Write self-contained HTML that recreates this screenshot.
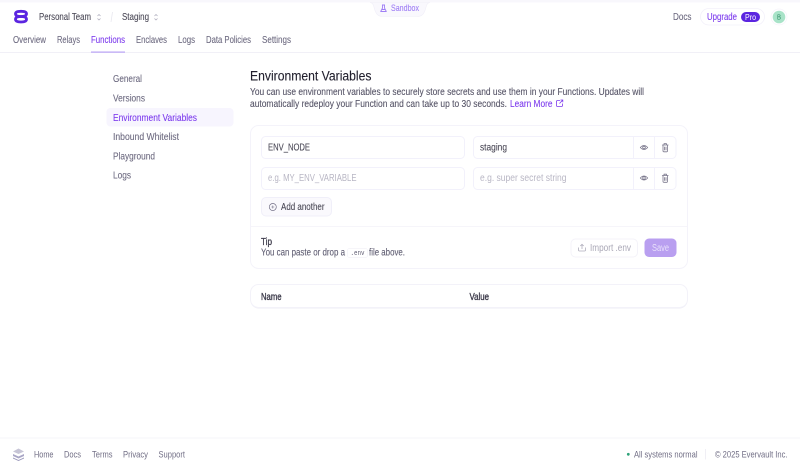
<!DOCTYPE html>
<html>
<head>
<meta charset="utf-8">
<style>
html,body{margin:0;padding:0;background:#fff;width:800px;height:470px;overflow:hidden}
svg{display:block;filter:blur(.35px)}
text{font-family:"Liberation Sans",sans-serif;font-size:9.800px;fill:#6d6a80;stroke-width:.1;paint-order:stroke}
.d{fill:#4a4856;stroke:#4a4856}
.p{fill:#7c3aed;stroke:#7c3aed}
.ph{fill:#b8b6c4}
.g{fill:#716e85;font-size:9.500px}
.t{stroke:#6d6a80}
.ic{fill:none;stroke:#7a778c;stroke-width:.8;stroke-linecap:round;stroke-linejoin:round}
</style>
</head>
<body>
<svg width="800" height="470" viewBox="0 0 800 470" xmlns="http://www.w3.org/2000/svg">
<rect width="800" height="470" fill="#fff"/>
<!-- top band -->
<rect width="800" height="2.500" fill="#f8f7fc"/>
<path d="M370 2.500C373 3 373.500 5 374.500 9C376 14 378 16.500 383 16.500H417C422 16.500 424 14 425.500 9C426.500 5 427 3 430 2.500Z" fill="#f9f8fd" stroke="#f1eff8" stroke-width=".6"/>
<path d="M382.500 5V8L380.700 11.500H386.300L384.500 8V5M382 5H385M381.500 9.500H385.500" fill="none" stroke="#a07ff5" stroke-width=".9" stroke-linejoin="round"/>
<text x="391" y="11.200" textLength="28" lengthAdjust="spacingAndGlyphs" style="fill:#9f7ef5;stroke:#9f7ef5;font-size:9.300px">Sandbox</text>

<!-- logo -->
<g fill="none" stroke="#5b25e0" stroke-width="2.800" stroke-linejoin="round">
<path d="M15.500 13.800C15.500 11.800 18 11.300 21 11.300S26.500 11.800 26.500 13.800 24 16.500 21 16.500 15.500 15.800 15.500 13.800Z"/>
<path d="M15.500 19.300C15.500 17.300 18 16.500 21 16.500S26.500 17.300 26.500 19.300 24 22 21 22 15.500 21.300 15.500 19.300Z"/>
</g>
<text x="39" y="20.200" textLength="52" lengthAdjust="spacingAndGlyphs" class="d">Personal Team</text>
<path d="M97.500 16L99 14.500L100.500 16M97.500 18.500L99 20L100.500 18.500" fill="none" stroke="#a9a7b8" stroke-width=".7"/>
<path d="M111 22L112.500 12" stroke="#e8e7ef" stroke-width=".8"/>
<text x="122" y="20.200" textLength="27" lengthAdjust="spacingAndGlyphs" class="d">Staging</text>
<path d="M154.500 16L156 14.500L157.500 16M154.500 18.500L156 20L157.500 18.500" fill="none" stroke="#a9a7b8" stroke-width=".7"/>

<!-- top right -->
<text x="673" y="20.200" textLength="18.500" lengthAdjust="spacingAndGlyphs" class="t" style="fill:#6d6a80">Docs</text>
<rect x="700.500" y="8.500" width="64" height="16.500" rx="8.250" fill="#fff" stroke="#f3f1fa" stroke-width=".8"/>
<text x="707" y="20.200" textLength="30" lengthAdjust="spacingAndGlyphs" class="p">Upgrade</text>
<rect x="741" y="12" width="19" height="10" rx="5" fill="#5b25e0"/>
<text x="745" y="20" textLength="11" lengthAdjust="spacingAndGlyphs" style="fill:#fff;font-size:8.500px">Pro</text>
<circle cx="779" cy="17" r="8" fill="#fff" stroke="#f5f4fa" stroke-width=".7"/>
<circle cx="779" cy="17" r="6.300" fill="#a8e3c8"/>
<text x="777" y="19.500" textLength="4" lengthAdjust="spacingAndGlyphs" style="fill:#2c8a63;font-size:7px">B</text>

<!-- tabs -->
<text x="13" y="43.200" textLength="33" lengthAdjust="spacingAndGlyphs" class="t">Overview</text>
<text x="57" y="43.200" textLength="23" lengthAdjust="spacingAndGlyphs" class="t">Relays</text>
<text x="91" y="43.200" textLength="34" lengthAdjust="spacingAndGlyphs" class="p">Functions</text>
<text x="136" y="43.200" textLength="31" lengthAdjust="spacingAndGlyphs" class="t">Enclaves</text>
<text x="178" y="43.200" textLength="17" lengthAdjust="spacingAndGlyphs" class="t">Logs</text>
<text x="206" y="43.200" textLength="45" lengthAdjust="spacingAndGlyphs" class="t">Data Policies</text>
<text x="262" y="43.200" textLength="29" lengthAdjust="spacingAndGlyphs" class="t">Settings</text>
<rect x="0" y="52" width="800" height="1" fill="#f1f0f7"/>
<rect x="91" y="51.500" width="34" height="1.200" fill="#b9a3f5"/>

<!-- sidebar -->
<rect x="106.500" y="108" width="127" height="18.500" rx="4" fill="#f7f5fe"/>
<text x="113" y="81.800" textLength="29" lengthAdjust="spacingAndGlyphs" class="t">General</text>
<text x="113" y="101.300" textLength="32" lengthAdjust="spacingAndGlyphs" class="t">Versions</text>
<text x="113" y="120.800" textLength="84" lengthAdjust="spacingAndGlyphs" class="p">Environment Variables</text>
<text x="113" y="139.800" textLength="66" lengthAdjust="spacingAndGlyphs" class="t">Inbound Whitelist</text>
<text x="113" y="159.300" textLength="42" lengthAdjust="spacingAndGlyphs" class="t">Playground</text>
<text x="113" y="178.300" textLength="18" lengthAdjust="spacingAndGlyphs" class="t">Logs</text>

<!-- heading -->
<text x="250" y="80.500" textLength="121.500" lengthAdjust="spacingAndGlyphs" style="fill:#22202e;stroke:#22202e;font-size:13.500px">Environment Variables</text>
<text x="250" y="95.200" textLength="394" lengthAdjust="spacingAndGlyphs" style="fill:#555366;stroke:#555366">You can use environment variables to securely store secrets and use them in your Functions. Updates will</text>
<text x="250" y="107.200" textLength="257" lengthAdjust="spacingAndGlyphs" style="fill:#555366;stroke:#555366">automatically redeploy your Function and can take up to 30 seconds.</text>
<text x="510" y="107.200" textLength="42.500" lengthAdjust="spacingAndGlyphs" class="p">Learn More</text>
<path d="M560 100.500H557.500Q556.500 100.500 556.500 101.500V105.500Q556.500 106.500 557.500 106.500H561.500Q562.500 106.500 562.500 105.500V103.500M559.500 103.500L562.800 100M560.500 100H562.800V102.300" fill="none" stroke="#7c3aed" stroke-width=".8"/>

<!-- card -->
<rect x="250.500" y="125.500" width="437" height="143" rx="8" fill="#fff" stroke="#f4f3fa"/>
<rect x="261.500" y="136.500" width="203" height="22" rx="4" fill="#fff" stroke="#f2f1fb"/>
<rect x="261.500" y="167.500" width="203" height="22" rx="4" fill="#fff" stroke="#f2f1fb"/>
<text x="268" y="150.700" textLength="42" lengthAdjust="spacingAndGlyphs" class="d">ENV_NODE</text>
<text x="268" y="181.200" textLength="88.500" lengthAdjust="spacingAndGlyphs" class="ph">e.g. MY_ENV_VARIABLE</text>

<rect x="473.500" y="136.500" width="202.500" height="22" rx="4" fill="#fff" stroke="#f2f1fb"/>
<rect x="473.500" y="167.500" width="202.500" height="22" rx="4" fill="#fff" stroke="#f2f1fb"/>
<path d="M633.500 137V158M654.500 137V158M633.500 168V189M654.500 168V189" stroke="#f2f1fb"/>
<text x="480" y="150.700" textLength="27" lengthAdjust="spacingAndGlyphs" class="d">staging</text>
<text x="480" y="181.200" textLength="86.500" lengthAdjust="spacingAndGlyphs" class="ph">e.g. super secret string</text>

<!-- eye + trash icons -->
<g class="ic">
<path d="M640.300 147.500Q644 143.500 647.700 147.500Q644 151.500 640.300 147.500Z"/><circle cx="644" cy="147.500" r="1.300"/>
<path d="M640.300 178Q644 174 647.700 178Q644 182 640.300 178Z"/><circle cx="644" cy="178" r="1.300"/>
<path d="M662.300 145H668.200M663 145V151Q663 151.800 663.800 151.800H666.800Q667.500 151.800 667.500 151V145M664 145V143.700H666.500V145M664.500 147V150M666 147V150"/>
<path d="M662.300 175.500H668.200M663 175.500V181.500Q663 182.300 663.800 182.300H666.800Q667.500 182.300 667.500 181.500V175.500M664 175.500V174.200H666.500V175.500M664.500 177.500V180.500M666 177.500V180.500"/>
</g>

<!-- add another -->
<rect x="261.500" y="197.500" width="70" height="18.500" rx="4.500" fill="#faf9fd" stroke="#f0eff9"/>
<circle cx="272.800" cy="207" r="3.500" fill="none" stroke="#716e85" stroke-width=".7"/>
<path d="M271.300 207H274.300M272.800 205.500V208.500" stroke="#716e85" stroke-width=".6"/>
<text x="281" y="210.200" textLength="43.500" lengthAdjust="spacingAndGlyphs" class="d">Add another</text>

<rect x="251" y="226" width="436" height="1" fill="#f6f5fa"/>
<text x="261" y="245.200" textLength="11" lengthAdjust="spacingAndGlyphs" style="fill:#3b3949;stroke:#3b3949;stroke-width:.3">Tip</text>
<text x="261" y="255.700" textLength="84" lengthAdjust="spacingAndGlyphs" style="fill:#5d5b70;stroke:#5d5b70">You can paste or drop a</text>
<rect x="347.500" y="248.500" width="20" height="9" rx="2" fill="#fff" stroke="#f3f2f8" stroke-width=".7"/>
<text x="350.500" y="255" textLength="14" lengthAdjust="spacingAndGlyphs" style="font-family:'Liberation Mono',monospace;font-size:7px;fill:#5d5b70">.env</text>
<text x="369" y="255.700" textLength="36" lengthAdjust="spacingAndGlyphs" style="fill:#5d5b70;stroke:#5d5b70">file above.</text>

<rect x="571" y="239" width="66.500" height="18" rx="4.500" fill="#fff" stroke="#f4f3f9"/>
<path d="M578.500 247.500V250Q578.500 251 579.500 251H584.500Q585.500 251 585.500 250V247.500M582 249V244.500M580.300 246L582 244.300L583.700 246" fill="none" stroke="#b0aebc" stroke-width=".8"/>
<text x="590" y="251.200" textLength="41" lengthAdjust="spacingAndGlyphs" style="fill:#a9a7b6">Import .env</text>
<rect x="644.500" y="238.500" width="32" height="18.500" rx="4.500" fill="#b99ff0"/>
<text x="652" y="251.200" textLength="17" lengthAdjust="spacingAndGlyphs" style="fill:#e9e1fb">Save</text>

<!-- table -->
<rect x="250.500" y="285.500" width="437" height="23" rx="8" fill="#eeedf6"/>
<rect x="250.500" y="284.500" width="437" height="23" rx="8" fill="#fff" stroke="#f3f2f9"/>
<text x="261" y="300" textLength="20.500" lengthAdjust="spacingAndGlyphs" style="fill:#3b3949;stroke:#3b3949;stroke-width:.35">Name</text>
<text x="469.500" y="300" textLength="19.500" lengthAdjust="spacingAndGlyphs" style="fill:#3b3949;stroke:#3b3949;stroke-width:.35">Value</text>

<!-- footer -->
<rect x="0" y="437.500" width="800" height="1" fill="#f5f4f9"/>
<path d="M13 451.500L18.500 448.500L24 451.500L18.500 454Z" fill="#c7c5d6"/>
<path d="M13 454L18.500 456.500L24 454V456L18.500 458.500L13 456Z" fill="#a9a6c6"/>
<path d="M13 457.500L18.500 460L24 457.500V458.500L18.500 461L13 458.500Z" fill="#9b98bb"/>
<text x="34" y="457.300" textLength="19.500" lengthAdjust="spacingAndGlyphs" class="g">Home</text>
<text x="64" y="457.300" textLength="17" lengthAdjust="spacingAndGlyphs" class="g">Docs</text>
<text x="92" y="457.300" textLength="20.500" lengthAdjust="spacingAndGlyphs" class="g">Terms</text>
<text x="123" y="457.300" textLength="25" lengthAdjust="spacingAndGlyphs" class="g">Privacy</text>
<text x="158.500" y="457.300" textLength="26.500" lengthAdjust="spacingAndGlyphs" class="g">Support</text>
<circle cx="628.300" cy="454.300" r="1.400" fill="#2fa37a"/>
<text x="634" y="457.300" textLength="63.500" lengthAdjust="spacingAndGlyphs" class="g">All systems normal</text>
<rect x="705" y="449" width="1" height="10.500" fill="#f0eff5"/>
<text x="715" y="457.300" textLength="72.500" lengthAdjust="spacingAndGlyphs" class="g">© 2025 Evervault Inc.</text>
</svg>
</body>
</html>
